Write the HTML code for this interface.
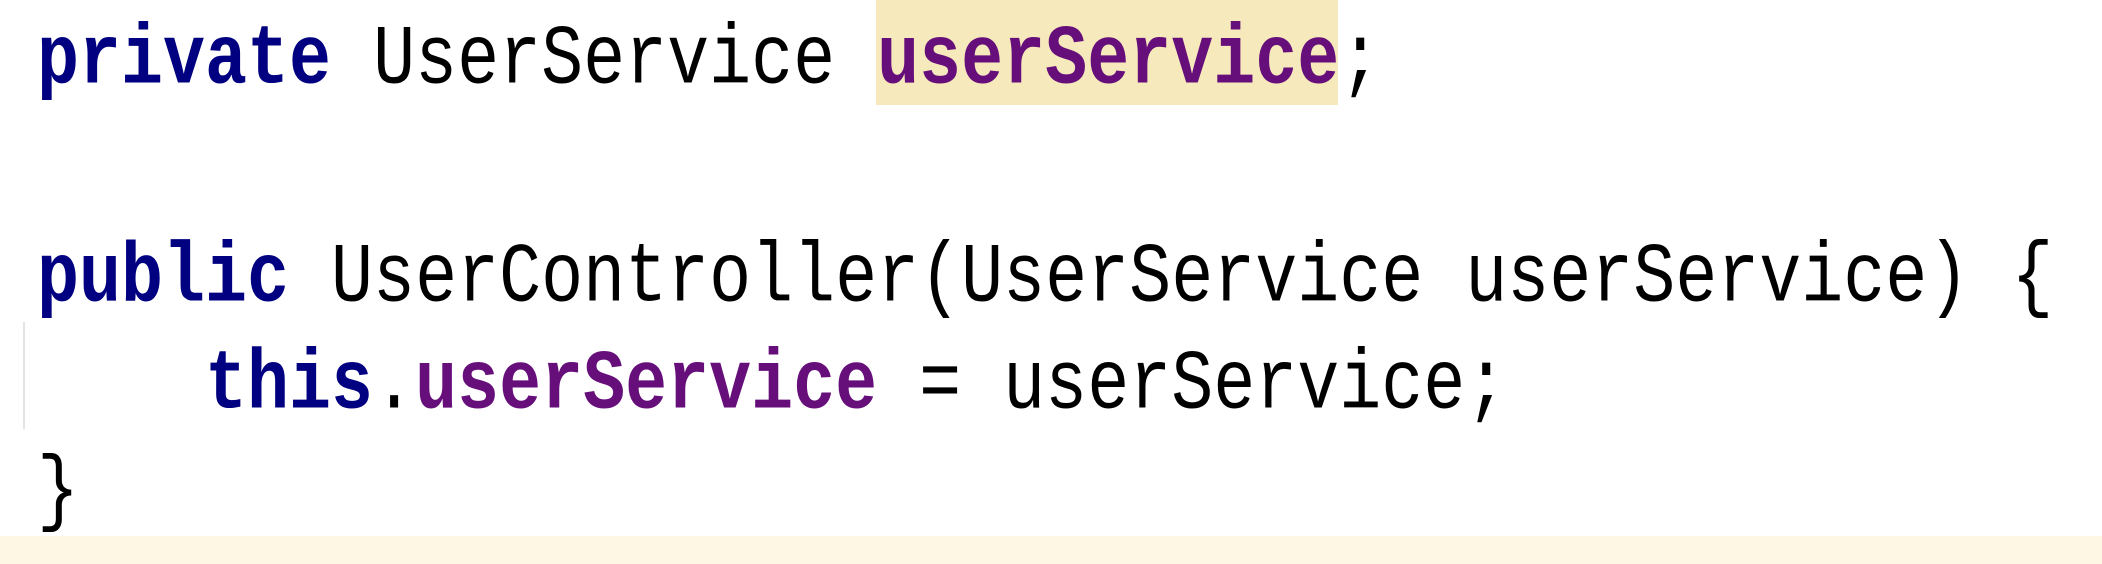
<!DOCTYPE html>
<html><head><style>
html,body{margin:0;padding:0;width:2102px;height:564px;overflow:hidden;background:#fff}
.l{position:absolute;left:37px;height:107px;line-height:107px;font-family:"Liberation Mono",monospace;font-size:70px;white-space:pre;color:#000;transform:scaleY(1.2);transform-origin:0 50%}
.k{color:#000080;font-weight:bold}
.f{color:#660e7a;font-weight:bold}
</style></head><body>
<div style="position:absolute;left:876px;top:0;width:462px;height:105px;background:#f6eabd"></div>
<div style="position:absolute;left:0;top:536px;width:2102px;height:28px;background:#fdf7e3"></div>
<div style="position:absolute;left:23px;top:322px;width:2px;height:107px;background:#e4e4e4"></div>
<div class="l" style="top:8px"><span class="k">private</span> UserService <span class="f">userService</span>;</div>
<div class="l" style="top:226px"><span class="k">public</span> UserController(UserService userService) {</div>
<div class="l" style="top:333px">    <span class="k">this</span>.<span class="f">userService</span> = userService;</div>
<div class="l" style="top:440px">}</div>
</body></html>
